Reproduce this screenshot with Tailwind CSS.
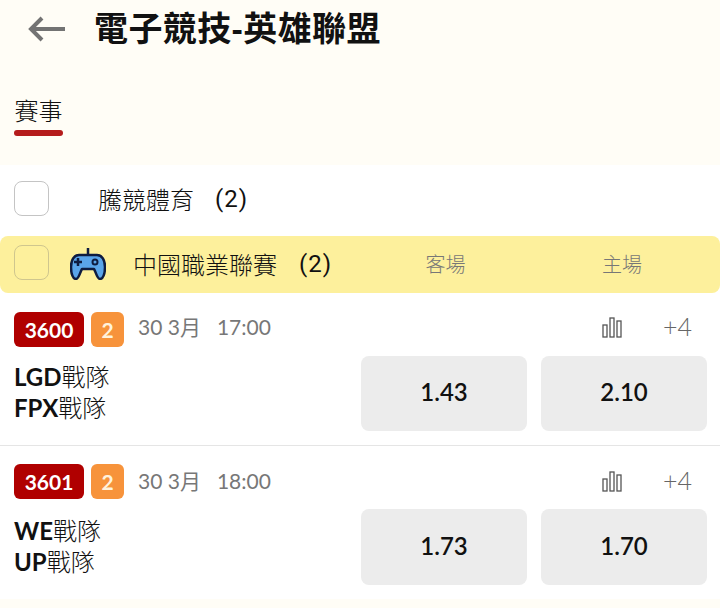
<!DOCTYPE html>
<html lang="zh-Hant">
<head>
    <meta charset="UTF-8">
    <meta name="viewport" content="width=device-width, initial-scale=1.0">
    <title>電子競技-英雄聯盟</title>
    <script src="https://cdn.jsdelivr.net/npm/@tailwindcss/browser@4"></script>
</head>
<body class="bg-white h-[608px] overflow-hidden font-['Lato','Noto_Sans_CJK_TC',sans-serif]">
    <!-- header -->
    <header class="bg-[#fffdf6] h-[165px]">
        <div class="flex items-center h-[58px] pl-[28px]">
            <svg class="w-[38px] h-[26px]" viewBox="0 0 38 26" fill="none" stroke="#737373" stroke-width="4">
                <path d="M37 13H3M14 2L3 13l11 11"/>
            </svg>
            <h1 class="ml-[28px] text-[34px] tracking-[0.4px] leading-[58px] font-bold text-[#111] whitespace-nowrap font-['Liberation_Sans','Noto_Sans_CJK_TC',sans-serif]">電子競技-英雄聯盟</h1>
        </div>
        <div class="pl-[14px] pt-[37px]">
            <div class="w-[49px]">
                <div class="text-[24px] leading-[30px] text-[#111] text-center font-light font-['Noto_Sans_CJK_TC',sans-serif]">賽事</div>
                <div class="h-[6px] mt-[5px] rounded-full bg-[#b51c1c]"></div>
            </div>
        </div>
    </header>

    <!-- league filter -->
    <div class="flex items-center h-[71px] pb-[4px] pl-[14px] text-[24px] text-[#111] font-light font-['Noto_Sans_CJK_TC',sans-serif]">
        <span class="w-[35px] h-[35px] rounded-[8px] border border-[#c4c4c4] bg-white"></span>
        <span class="ml-[49px]">騰競體育</span>
        <span class="ml-[21px] font-normal tracking-[1px] font-['Roboto',sans-serif]">(2)</span>
    </div>

    <div class="flex items-center h-[57px] pb-[1px] pl-[14px] pr-[13px] rounded-[8px] bg-[#fdf09c] text-[24px] text-[#111] font-light font-['Noto_Sans_CJK_TC',sans-serif]">
        <span class="w-[35px] h-[35px] mb-[3px] rounded-[8px] border border-[#cfc68e] bg-[#fdf09c]"></span>
        <svg class="ml-[21px] w-[36px] h-[32px]" viewBox="0 0 36 32">
            <path d="M18 0v8" stroke="#0e1c40" stroke-width="2.5"/>
            <path d="M9 7H27C32 7 35 12 35 19C35 26 33 31 30 31C27 31 26 24 24 21H12C10 24 9 31 6 31C3 31 1 26 1 19C1 12 4 7 9 7Z" fill="#5aa5ea" stroke="#0e1c40" stroke-width="2.5" stroke-linejoin="round"/>
            <path d="M4 14h8M8 10v8" stroke="#0e1c40" stroke-width="2.5"/>
            <circle cx="25" cy="14" r="2.5" fill="none" stroke="#0e1c40" stroke-width="2"/>
        </svg>
        <span class="ml-[27px] whitespace-nowrap">中國職業聯賽</span>
        <span class="ml-[22px] font-normal tracking-[1px] font-['Roboto',sans-serif]">(2)</span>
        <div class="flex gap-[14px] ml-auto text-[20px] text-[#777] text-center">
            <span class="w-[166px] pl-[3px]">客場</span>
            <span class="w-[166px] pr-[4px]">主場</span>
        </div>
    </div>

    <!-- match 1 -->
    <section class="h-[153px] pt-[19px] px-[13px] border-b border-[#e5e5e5]">
        <div class="flex items-center h-[35px]">
            <span class="flex items-center justify-center w-[70px] h-[35px] ml-[1px] rounded-[6px] bg-[#b00000] text-white text-[21px] font-bold">3600</span>
            <span class="flex items-center justify-center w-[33px] h-[35px] ml-[7px] rounded-[6px] bg-[#f7933b] text-[#fff2dc] text-[21px] font-bold">2</span>
            <span class="ml-[14px] mb-[5px] text-[21px] text-[#777]">30 3月</span>
            <span class="ml-[16px] mb-[5px] text-[21px] text-[#777]">17:00</span>
            <svg class="ml-auto mb-[4px] w-[20px] h-[21px]" viewBox="0 0 20 21" fill="none" stroke="#555" stroke-width="1.3">
                <rect x="1" y="8" width="4" height="12"/><rect x="8" y="1" width="4" height="19"/><rect x="15" y="4" width="4" height="16"/>
            </svg>
            <span class="ml-[41px] mr-[15px] mb-[5px] text-[25px] font-light text-[#666]">+4</span>
        </div>
        <div class="flex mt-[9px]">
            <div class="flex-1 pl-[1px] pt-[5px] text-[24px] leading-[31px] text-[#111]">
                <div><b>LGD</b><span class="font-light">戰隊</span></div>
                <div><b>FPX</b><span class="font-light">戰隊</span></div>
            </div>
            <div class="flex gap-[14px]">
                <button class="w-[166px] h-[75px] pb-[3px] rounded-[8px] bg-[#ececec] text-[24px] font-semibold text-[#111]">1.43</button>
                <button class="w-[166px] h-[75px] pb-[3px] rounded-[8px] bg-[#ececec] text-[24px] font-semibold text-[#111]">2.10</button>
            </div>
        </div>
    </section>

    <!-- match 2 -->
    <section class="h-[153px] pt-[18px] px-[13px]">
        <div class="flex items-center h-[35px]">
            <span class="flex items-center justify-center w-[70px] h-[35px] ml-[1px] rounded-[6px] bg-[#b00000] text-white text-[21px] font-bold">3601</span>
            <span class="flex items-center justify-center w-[33px] h-[35px] ml-[7px] rounded-[6px] bg-[#f7933b] text-[#fff2dc] text-[21px] font-bold">2</span>
            <span class="ml-[14px] mb-[1px] text-[21px] text-[#777]">30 3月</span>
            <span class="ml-[16px] mb-[1px] text-[21px] text-[#777]">18:00</span>
            <svg class="ml-auto mb-[1px] w-[20px] h-[21px]" viewBox="0 0 20 21" fill="none" stroke="#555" stroke-width="1.3">
                <rect x="1" y="8" width="4" height="12"/><rect x="8" y="1" width="4" height="19"/><rect x="15" y="4" width="4" height="16"/>
            </svg>
            <span class="ml-[41px] mr-[15px] mb-[1px] text-[25px] font-light text-[#666]">+4</span>
        </div>
        <div class="flex mt-[10px]">
            <div class="flex-1 pl-[1px] pt-[6px] text-[24px] leading-[31px] text-[#111]">
                <div><b>WE</b><span class="font-light">戰隊</span></div>
                <div><b>UP</b><span class="font-light">戰隊</span></div>
            </div>
            <div class="flex gap-[14px]">
                <button class="w-[166px] h-[76px] pb-[2px] rounded-[8px] bg-[#ececec] text-[24px] font-semibold text-[#111]">1.73</button>
                <button class="w-[166px] h-[76px] pb-[2px] rounded-[8px] bg-[#ececec] text-[24px] font-semibold text-[#111]">1.70</button>
            </div>
        </div>
    </section>
    <div class="h-[10px] bg-[#fffdf6]"></div>
</body>
</html>
